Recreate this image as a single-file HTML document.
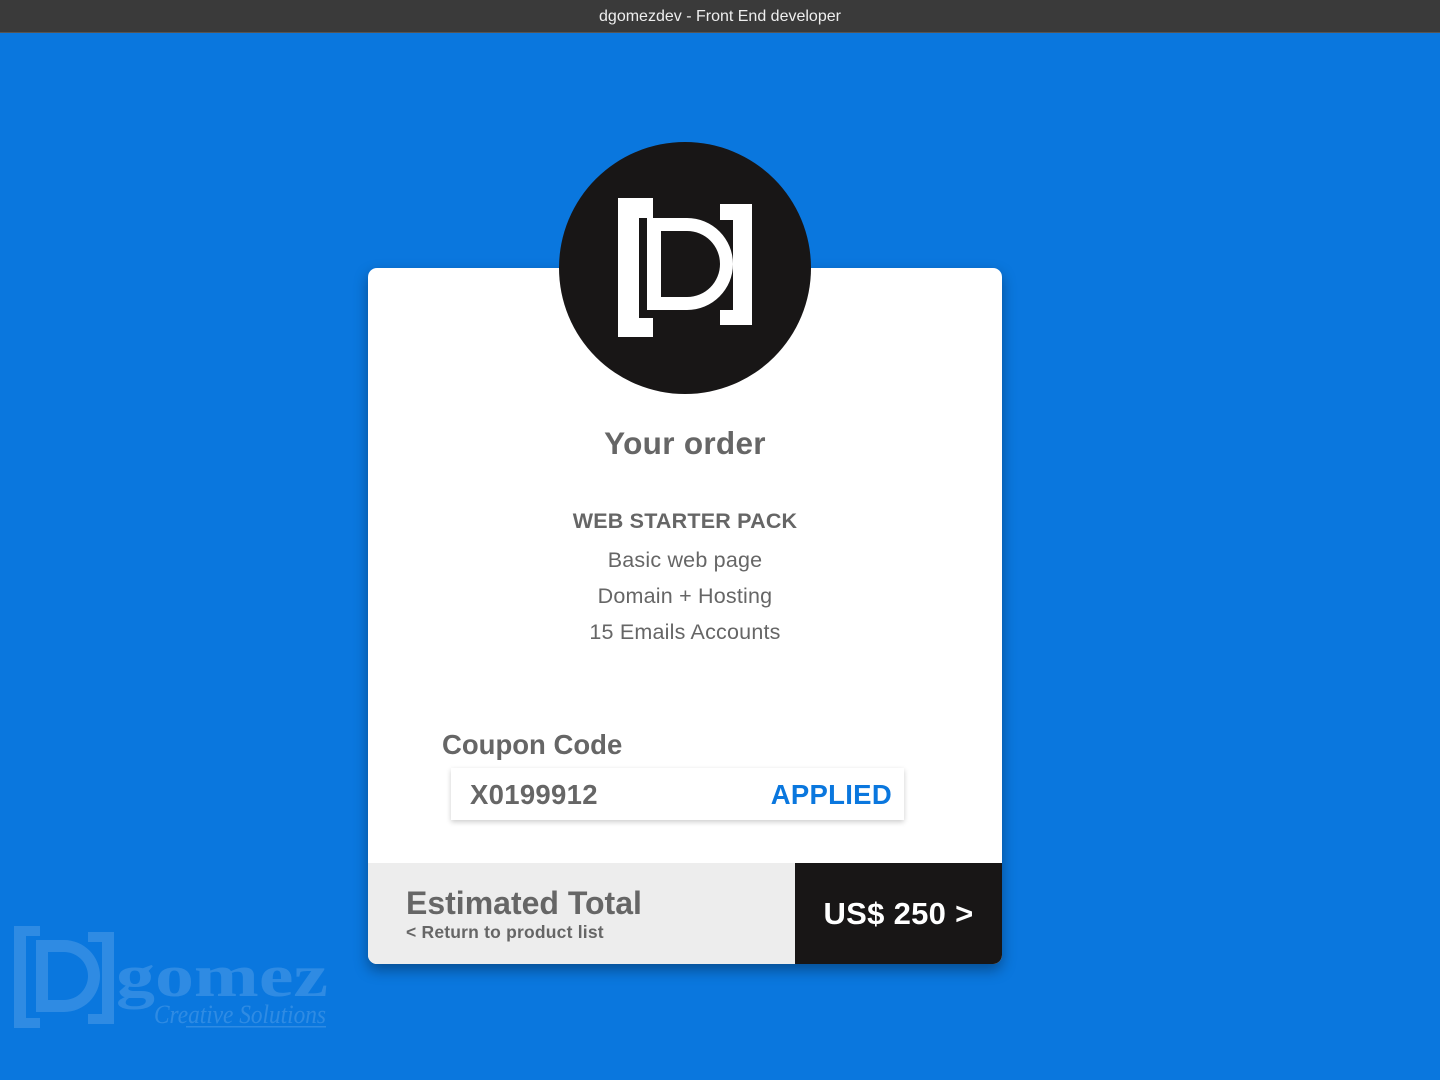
<!DOCTYPE html>
<html><head><meta charset="utf-8"><style>
*{margin:0;padding:0;box-sizing:border-box}
body{width:1440px;height:1080px;background:#0a77de;font-family:"Liberation Sans",Arial,sans-serif;position:relative;overflow:hidden}
.top{position:absolute;left:0;top:0;width:1440px;height:33px;background:#3a3a3a;color:#eee;font-size:16px;text-align:center;line-height:33px;border-bottom:1px solid #555}
.card{position:absolute;left:368px;top:268px;width:634px;height:696px;background:#fff;border-radius:9px;box-shadow:0 6px 14px rgba(0,0,0,.35);overflow:hidden}
.t{position:absolute;left:0;width:634px;text-align:center;color:#666}
.foot{position:absolute;left:0;top:595px;width:634px;height:101px;background:#ededed}
.dark{position:absolute;left:427px;top:0;width:207px;height:101px;background:#181616;color:#fff;font-weight:bold;font-size:31px;line-height:101px;text-align:center;letter-spacing:.3px}
.wm{position:absolute;left:14px;top:926px;opacity:.15}
</style></head><body>
<div class="top">dgomezdev - Front End developer</div>
<div class="card">
<div class="t" style="top:157px;font-size:31.5px;font-weight:bold;letter-spacing:.3px">Your order</div>
<div class="t" style="top:241px;font-size:21.5px;font-weight:bold;letter-spacing:.2px">WEB STARTER PACK</div>
<div class="t" style="top:280px;font-size:21.5px;letter-spacing:.2px">Basic web page</div>
<div class="t" style="top:316px;font-size:21.5px;letter-spacing:.2px">Domain + Hosting</div>
<div class="t" style="top:352px;font-size:21.5px;letter-spacing:.2px">15 Emails Accounts</div>
<div style="position:absolute;left:74px;top:461px;font-size:27.5px;font-weight:bold;color:#666">Coupon Code</div>
<div style="position:absolute;left:83px;top:500px;width:453px;height:52px;background:#fff;box-shadow:0 2px 5px rgba(0,0,0,.2)">
<span style="position:absolute;left:19px;top:11px;font-size:27.5px;font-weight:bold;color:#666;letter-spacing:.3px">X0199912</span>
<span style="position:absolute;right:12px;top:11px;font-size:27.5px;font-weight:bold;color:#0a77de;letter-spacing:.3px">APPLIED</span>
</div>
<div class="foot">
<div style="position:absolute;left:38px;top:22px;font-size:32px;font-weight:bold;color:#666">Estimated Total</div>
<div style="position:absolute;left:38px;top:59px;font-size:17.5px;font-weight:bold;color:#666;letter-spacing:.2px">&lt; Return to product list</div>
<div class="dark">US$ 250 &gt;</div>
</div>
</div>
<svg style="position:absolute;left:559px;top:142px" width="252" height="252" viewBox="0 0 252 252">
<circle cx="126" cy="126" r="126" fill="#181616"/>
<g transform="translate(-559,-142)">
<path fill="#fff" d="M618 198h35v20h-14v100h14v19h-35z"/>
<path fill="#fff" d="M720 204h32v121h-32v-15h13v-90h-13z"/>
<path fill="#181616" d="M640 218h12v100h-12z"/>
<path fill="#fff" fill-rule="evenodd" d="M647 218h40a46 46 0 0 1 0 92h-40zM661 231v66h26a33 33 0 0 0 0-66z"/>
</g>
</svg>
<svg class="wm" width="320" height="105" viewBox="0 0 320 105">
<g fill="#fff">
<path d="M0 0h26v10h-14v82h14v10h-26z"/>
<path d="M74 6h26v92h-26v-10h14v-72h-14z"/>
<path fill-rule="evenodd" d="M22 14h28a36 36 0 0 1 0 72h-28zM34 26v48h16a24 24 0 0 0 0-48z"/>
</g>
<text x="102" y="70" font-family="Liberation Serif,serif" font-size="60" font-weight="bold" fill="#fff" textLength="212" lengthAdjust="spacingAndGlyphs">gomez</text>
<text x="140" y="97" font-family="Liberation Serif,serif" font-style="italic" font-size="26" fill="#fff" textLength="172" lengthAdjust="spacingAndGlyphs">Creative Solutions</text>
<rect x="172" y="100" width="140" height="1.5" fill="#fff"/>
</svg>
</body></html>
